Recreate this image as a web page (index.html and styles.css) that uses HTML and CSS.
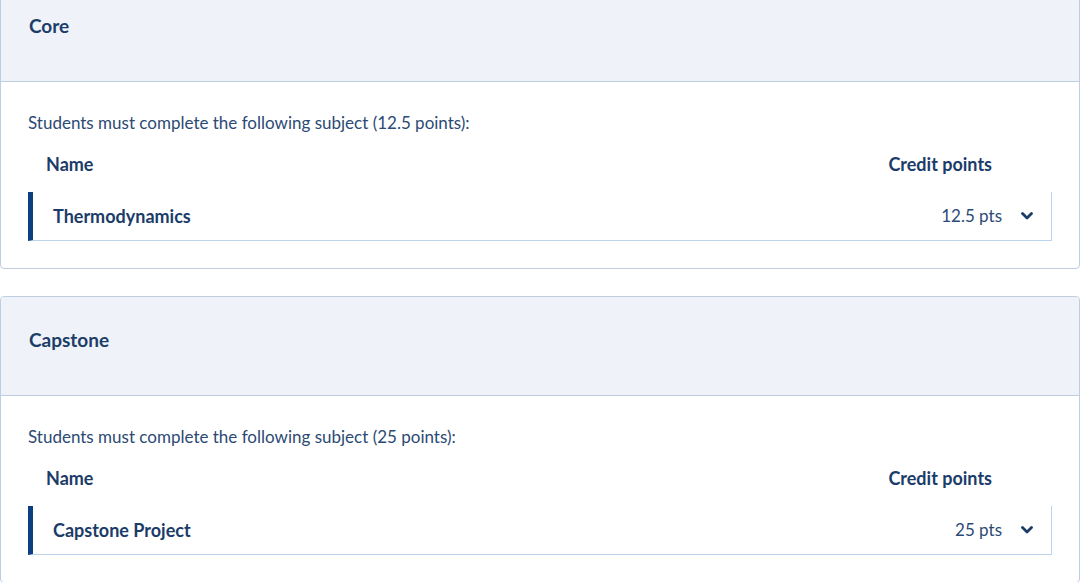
FILE: index.html
```html
<!DOCTYPE html>
<html lang="en">
  <head>
    <meta charset="UTF-8" />
    <meta name="viewport" content="width=device-width, initial-scale=1.0" />
    <title>Course structure</title>
    <link rel="stylesheet" href="styles.css">
  </head>
  <body>
    <div class="structure">
      <section class="block">
        <h2 class="block-title">Core</h2>
        <div class="block-body">
          <p class="rule">Students must complete the following subject (12.5 points):</p>
          <div class="table-head">
            <span class="col-name">Name</span>
            <span class="col-points">Credit points</span>
          </div>
          <div class="subject">
            <span class="subject-name">Thermodynamics</span>
            <span class="subject-points">12.5 pts</span>
            <button class="toggle" aria-label="Show details">
              <svg width="12" height="8" viewBox="0 0 12 8">
                <path d="M1.5 1.5 L6 6 L10.5 1.5" fill="none" stroke="currentColor" stroke-width="2.8" stroke-linecap="round" stroke-linejoin="round"/>
              </svg>
            </button>
          </div>
        </div>
      </section>

      <section class="block">
        <h2 class="block-title">Capstone</h2>
        <div class="block-body">
          <p class="rule">Students must complete the following subject (25 points):</p>
          <div class="table-head">
            <span class="col-name">Name</span>
            <span class="col-points">Credit points</span>
          </div>
          <div class="subject">
            <span class="subject-name">Capstone Project</span>
            <span class="subject-points">25 pts</span>
            <button class="toggle" aria-label="Show details">
              <svg width="12" height="8" viewBox="0 0 12 8">
                <path d="M1.5 1.5 L6 6 L10.5 1.5" fill="none" stroke="currentColor" stroke-width="2.8" stroke-linecap="round" stroke-linejoin="round"/>
              </svg>
            </button>
          </div>
        </div>
      </section>
    </div>
  </body>
</html>
```

FILE: styles.css
```css
body {
  margin: 0;
  font-family: Lato, "Noto Sans", sans-serif;
  font-size: 17px;
  line-height: 24px;
  color: #2b4a74;
  background: #fff;
}
.structure {
  margin-top: -18px;
}
.block {
  border: 1px solid #bfcde0;
  border-radius: 4px;
  margin-bottom: 27px;
  background: white;
}
.block-title {
  margin: 0;
  padding: 31px 28px 43px;
  font-size: 19px;
  line-height: 24px;
  font-weight: 700;
  color: #1d3d69;
  background: #eff3f9;
  border-bottom: 1px solid #bfcde0;
  border-radius: 4px 4px 0 0;
}
.block-body {
  padding: 29px 27px 27px 27px;
}
.rule {
  margin: 0 0 17px;
}
.table-head {
  display: flex;
  padding: 0 60px 0 18px;
  margin-bottom: 16px;
  font-size: 18px;
  font-weight: 700;
  color: #1b3b69;
}
.col-name {
  flex: 1;
}
.subject {
  display: flex;
  align-items: center;
  padding: 12px 18px 12px 20px;
  border-left: 5px solid #0b3f80;
  border-right: 1px solid #bcd3ee;
  border-bottom: 1px solid #bcd3ee;
}
.subject-name {
  flex: 1;
  font-size: 18px;
  font-weight: 700;
  color: #1b3b69;
}
.subject-points {
  color: #2b4a74;
}
.toggle {
  display: flex;
  align-items: center;
  margin-left: 19px;
  padding: 0;
  border: none;
  background: none;
  color: #1b3b69;
  cursor: pointer;
}
```
